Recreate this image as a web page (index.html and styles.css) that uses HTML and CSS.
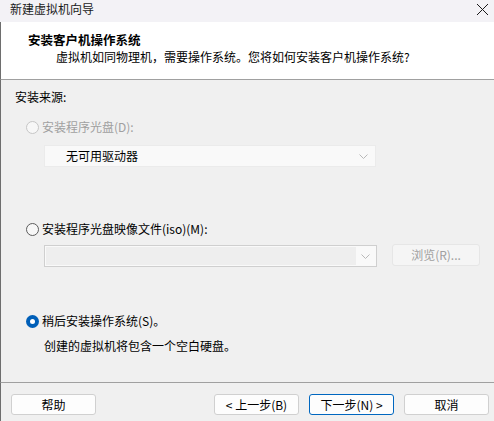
FILE: index.html
```html
<!DOCTYPE html>
<html lang="zh-CN">
<head>
<meta charset="utf-8">
<link rel="stylesheet" href="styles.css">
</head>
<body>
<div class="window">
  <div class="titlebar">
    <span class="title">新建虚拟机向导</span>
    <svg class="close" width="11" height="11" viewBox="0 0 11 11" shape-rendering="crispEdges"><path d="M0 0 L11 11 M11 0 L0 11" stroke="#1a1a1a" stroke-width="1.3" fill="none"/></svg>
  </div>
  <div class="header">
    <div class="h-title">安装客户机操作系统</div>
    <div class="h-sub">虚拟机如同物理机，需要操作系统。您将如何安装客户机操作系统?</div>
  </div>
  <div class="content">
    <div class="label">安装来源:</div>
    <div class="radio-row disabled r1"><span class="radio off dis"></span><span>安装程序光盘(D):</span></div>
    <div class="combo combo1"><span class="combo-text">无可用驱动器</span><svg class="arrow" width="9" height="5" viewBox="0 0 9 5"><path d="M0.5 0.5 L4.5 4.5 L8.5 0.5" stroke="#b8b8b8" fill="none"/></svg></div>
    <div class="radio-row r2"><span class="radio off"></span><span>安装程序光盘映像文件(iso)(M):</span></div>
    <div class="iso-row">
      <div class="combo combo2"><span class="field"></span><span class="arrow-box"><svg width="9" height="5" viewBox="0 0 9 5"><path d="M0.5 0.5 L4.5 4.5 L8.5 0.5" stroke="#b8b8b8" fill="none"/></svg></span></div>
      <div class="btn browse">浏览(R)...</div>
    </div>
    <div class="radio-row r3"><span class="radio on"></span><span>稍后安装操作系统(S)。</span></div>
    <div class="note">创建的虚拟机将包含一个空白硬盘。</div>
  </div>
  <div class="footer">
    <div class="btn">帮助</div>
    <div class="spacer"></div>
    <div class="btn">&lt; 上一步(B)</div>
    <div class="btn primary">下一步(N) &gt;</div>
    <div class="btn">取消</div>
  </div>
</div>
</body>
</html>
```
FILE: styles.css
```css
html, body {
  margin: 0;
  padding: 0;
  background: #f0f0f0;
}
body {
  font-family: "Noto Sans CJK SC", "Noto Sans", sans-serif;
  font-size: 12px;
  color: #000;
}
.window {
  width: 494px;
  height: 421px;
  display: flex;
  flex-direction: column;
  overflow: hidden;
}
.titlebar {
  height: 22px;
  background: #f3f2f6;
  display: flex;
  align-items: flex-start;
  padding: 2px 0 0 10px;
  box-sizing: border-box;
  flex: none;
}
.title {
  flex: 1;
  line-height: 14px;
  color: #1a1a1a;
}
.close {
  flex: none;
  display: block;
  margin: 2px 6px 0 0;
}
.header {
  background: #fff;
  border-left: 1px solid #6e6e6e;
  border-bottom: 1px solid #a0a0a0;
  box-sizing: border-box;
  height: 58px;
  padding-top: 10px;
  flex: none;
}
.h-title {
  font-weight: bold;
  font-size: 12.5px;
  padding-left: 27px;
  line-height: 16px;
}
.h-sub {
  padding-left: 55px;
  line-height: 16px;
  margin-top: 1px;
}
.content {
  border-left: 1px solid #6e6e6e;
  padding: 9px 0 0 14px;
  height: 303px;
  box-sizing: border-box;
  border-bottom: 1px solid #a0a0a0;
  flex: none;
}
.label {
  line-height: 16px;
}
.radio-row {
  display: flex;
  align-items: center;
  line-height: 16px;
  margin-left: 11px;
  gap: 3px;
}
.radio-row.disabled {
  color: #a0a0a0;
}
.r1 { margin-top: 14px; }
.r2 { margin-top: 54px; }
.r3 { margin-top: 46px; }
.radio {
  width: 13px;
  height: 13px;
  border-radius: 50%;
  box-sizing: border-box;
  flex: none;
}
.radio.off {
  border: 1px solid #5c5c5c;
  background: #f7f7f7;
}
.radio.off.dis {
  border-color: #c6c6c6;
  background: #f7f7f7;
}
.radio.on {
  background: #005fb8;
  position: relative;
}
.radio.on::after {
  content: "";
  position: absolute;
  left: 4px;
  top: 4px;
  width: 5px;
  height: 5px;
  border-radius: 50%;
  background: #fff;
}
.combo {
  height: 22px;
  box-sizing: border-box;
  display: flex;
  align-items: center;
}
.combo1 {
  margin: 10px 0 0 29px;
  width: 332px;
  background: #f9f9f9;
  border: 1px solid #ebebeb;
  padding: 0 7px 0 21px;
}
.combo-text {
  flex: 1;
  line-height: 16px;
}
.iso-row {
  display: flex;
  align-items: flex-start;
  margin: 7px 0 0 29px;
}
.combo2 {
  width: 333px;
  border: 1px solid #cfcfcf;
  background: #f9f9f9;
  padding: 1px;
  margin-top: 1px;
}
.field {
  flex: 1;
  height: 18px;
  background: #eeeeee;
}
.arrow-box {
  width: 19px;
  display: flex;
  justify-content: center;
  align-items: center;
}
.btn {
  width: 85px;
  height: 21px;
  box-sizing: border-box;
  border: 1px solid #d0d0d0;
  border-radius: 3px;
  background: #fdfdfd;
  display: flex;
  align-items: center;
  justify-content: center;
  line-height: 16px;
  flex: none;
}
.browse {
  margin-left: 15px;
  width: 88px;
  height: 22px;
  background: #f5f5f5;
  border-color: #e6e6e6;
  color: #a0a0a0;
}
.note {
  margin: 9px 0 0 29px;
  line-height: 16px;
}
.footer {
  flex: 1;
  display: flex;
  gap: 10px;
  padding: 11px 5px 0 10px;
  border-left: 1px solid #6e6e6e;
  align-items: flex-start;
}
.spacer {
  flex: 1;
}
.primary {
  border-color: #0067c0;
}
```
